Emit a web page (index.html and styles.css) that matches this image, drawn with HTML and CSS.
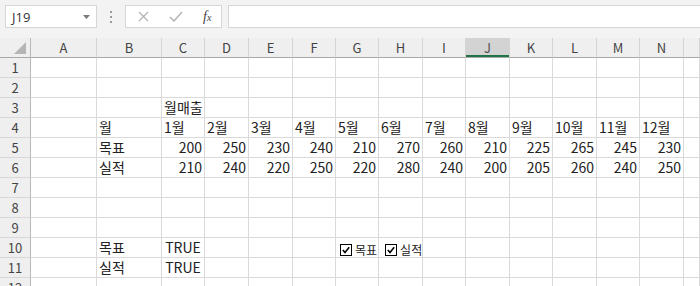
FILE: index.html
```html
<!DOCTYPE html>
<html lang="ko">
<head>
  <meta charset="UTF-8">
  <title>월매출</title>
  <link rel="stylesheet" href="styles.css">
</head>
<body>

  <!-- Formula bar -->
  <div class="toolbar">
    <div class="namebox">
      <span>J19</span>
      <svg class="arrow" width="7" height="4" viewBox="0 0 7 4"><path d="M0 0H7L3.5 4Z" fill="#7a7a7a"/></svg>
    </div>
    <div class="grip"><i></i><i></i><i></i></div>
    <div class="fxbox">
      <svg width="11" height="11" viewBox="0 0 11 11"><path d="M1 1L10 10M10 1L1 10" stroke="#b4b4b4" stroke-width="1.3" fill="none"/></svg>
      <svg width="14" height="11" viewBox="0 0 14 11"><path d="M1 6L5 10L13 1" stroke="#b4b4b4" stroke-width="1.5" fill="none"/></svg>
      <span class="fx">f<small>x</small></span>
    </div>
    <div class="formula"></div>
  </div>

  <!-- Sheet -->
  <div class="sheet">
    <div class="row head">
      <div class="corner"></div>
      <div class="ch">A</div><div class="ch">B</div><div class="ch">C</div><div class="ch">D</div>
      <div class="ch">E</div><div class="ch">F</div><div class="ch">G</div><div class="ch">H</div>
      <div class="ch">I</div><div class="ch sel">J</div><div class="ch">K</div><div class="ch">L</div>
      <div class="ch">M</div><div class="ch">N</div><div class="ch"></div>
    </div>

    <div class="row">
      <div class="rh">1</div>
      <div class="c"></div><div class="c"></div><div class="c"></div><div class="c"></div><div class="c"></div>
      <div class="c"></div><div class="c"></div><div class="c"></div><div class="c"></div><div class="c"></div>
      <div class="c"></div><div class="c"></div><div class="c"></div><div class="c"></div><div class="c"></div>
    </div>
    <div class="row">
      <div class="rh">2</div>
      <div class="c"></div><div class="c"></div><div class="c"></div><div class="c"></div><div class="c"></div>
      <div class="c"></div><div class="c"></div><div class="c"></div><div class="c"></div><div class="c"></div>
      <div class="c"></div><div class="c"></div><div class="c"></div><div class="c"></div><div class="c"></div>
    </div>
    <div class="row">
      <div class="rh">3</div>
      <div class="c"></div><div class="c"></div><div class="c over">월매출</div><div class="c"></div><div class="c"></div>
      <div class="c"></div><div class="c"></div><div class="c"></div><div class="c"></div><div class="c"></div>
      <div class="c"></div><div class="c"></div><div class="c"></div><div class="c"></div><div class="c"></div>
    </div>
    <div class="row">
      <div class="rh">4</div>
      <div class="c"></div><div class="c">월</div>
      <div class="c">1월</div><div class="c">2월</div><div class="c">3월</div><div class="c">4월</div>
      <div class="c">5월</div><div class="c">6월</div><div class="c">7월</div><div class="c">8월</div>
      <div class="c">9월</div><div class="c">10월</div><div class="c">11월</div><div class="c">12월</div>
      <div class="c"></div>
    </div>
    <div class="row">
      <div class="rh">5</div>
      <div class="c"></div><div class="c">목표</div>
      <div class="c num">200</div><div class="c num">250</div><div class="c num">230</div><div class="c num">240</div>
      <div class="c num">210</div><div class="c num">270</div><div class="c num">260</div><div class="c num">210</div>
      <div class="c num">225</div><div class="c num">265</div><div class="c num">245</div><div class="c num">230</div>
      <div class="c"></div>
    </div>
    <div class="row">
      <div class="rh">6</div>
      <div class="c"></div><div class="c">실적</div>
      <div class="c num">210</div><div class="c num">240</div><div class="c num">220</div><div class="c num">250</div>
      <div class="c num">220</div><div class="c num">280</div><div class="c num">240</div><div class="c num">200</div>
      <div class="c num">205</div><div class="c num">260</div><div class="c num">240</div><div class="c num">250</div>
      <div class="c"></div>
    </div>
    <div class="row">
      <div class="rh">7</div>
      <div class="c"></div><div class="c"></div><div class="c"></div><div class="c"></div><div class="c"></div>
      <div class="c"></div><div class="c"></div><div class="c"></div><div class="c"></div><div class="c"></div>
      <div class="c"></div><div class="c"></div><div class="c"></div><div class="c"></div><div class="c"></div>
    </div>
    <div class="row">
      <div class="rh">8</div>
      <div class="c"></div><div class="c"></div><div class="c"></div><div class="c"></div><div class="c"></div>
      <div class="c"></div><div class="c"></div><div class="c"></div><div class="c"></div><div class="c"></div>
      <div class="c"></div><div class="c"></div><div class="c"></div><div class="c"></div><div class="c"></div>
    </div>
    <div class="row">
      <div class="rh">9</div>
      <div class="c"></div><div class="c"></div><div class="c"></div><div class="c"></div><div class="c"></div>
      <div class="c"></div><div class="c"></div><div class="c"></div><div class="c"></div><div class="c"></div>
      <div class="c"></div><div class="c"></div><div class="c"></div><div class="c"></div><div class="c"></div>
    </div>
    <div class="row">
      <div class="rh">10</div>
      <div class="c"></div><div class="c">목표</div><div class="c bool">TRUE</div><div class="c"></div><div class="c"></div>
      <div class="c"></div><div class="c"></div><div class="c"></div><div class="c"></div><div class="c"></div>
      <div class="c"></div><div class="c"></div><div class="c"></div><div class="c"></div><div class="c"></div>
    </div>
    <div class="row">
      <div class="rh">11</div>
      <div class="c"></div><div class="c">실적</div><div class="c bool">TRUE</div><div class="c"></div><div class="c"></div>
      <div class="c"></div><div class="c"></div><div class="c"></div><div class="c"></div><div class="c"></div>
      <div class="c"></div><div class="c"></div><div class="c"></div><div class="c"></div><div class="c"></div>
    </div>
    <div class="row">
      <div class="rh">12</div>
      <div class="c"></div><div class="c"></div><div class="c"></div><div class="c"></div><div class="c"></div>
      <div class="c"></div><div class="c"></div><div class="c"></div><div class="c"></div><div class="c"></div>
      <div class="c"></div><div class="c"></div><div class="c"></div><div class="c"></div><div class="c"></div>
    </div>
  </div>

  <!-- Form controls floating over the sheet -->
  <div class="controls">
    <label class="check">
      <svg width="12" height="12" viewBox="0 0 12 12"><rect x="0.5" y="0.5" width="11" height="11" fill="#fff" stroke="#000"/><path d="M2.8 6L5 8.4L9.2 3.2" stroke="#000" stroke-width="1.6" fill="none"/></svg>
      목표
    </label>
    <label class="check">
      <svg width="12" height="12" viewBox="0 0 12 12"><rect x="0.5" y="0.5" width="11" height="11" fill="#fff" stroke="#000"/><path d="M2.8 6L5 8.4L9.2 3.2" stroke="#000" stroke-width="1.6" fill="none"/></svg>
      실적
    </label>
  </div>

</body>
</html>
```

FILE: styles.css
```css
body {
  margin: 0;
  width: 700px;
  height: 286px;
  overflow: hidden;
  position: relative;
  background-color: white;
  font-family: "Noto Sans CJK KR", sans-serif;
  color: #222;
}
.toolbar {
  height: 38px;
  box-sizing: border-box;
  padding: 5px 0 0 5px;
  background-color: #f3f3f3;
  display: flex;
  align-items: flex-start;
}
.namebox {
  width: 92px;
  height: 23px;
  box-sizing: border-box;
  border: 1px solid #d6d6d6;
  background-color: white;
  display: flex;
  align-items: center;
  justify-content: space-between;
  padding: 0 6px 0 6px;
  font-family: "Open Sans", sans-serif;
  font-size: 13px;
  color: #333;
}
.grip {
  width: 28px;
  height: 23px;
  display: flex;
  flex-direction: column;
  align-items: center;
  justify-content: center;
  gap: 3px;
}
.grip i {
  width: 2px;
  height: 2px;
  background-color: #9a9a9a;
}
.fxbox {
  width: 97px;
  height: 23px;
  box-sizing: border-box;
  border: 1px solid #d6d6d6;
  background-color: white;
  display: flex;
  align-items: center;
  padding-left: 12px;
  gap: 20px;
}
.fx {
  font-family: "Liberation Serif", serif;
  font-style: italic;
  font-size: 14px;
  color: #444;
}
.fx small {
  font-size: 10px;
}
.formula {
  flex: 1;
  height: 23px;
  margin-left: 6px;
  box-sizing: border-box;
  border: 1px solid #d6d6d6;
  border-right: none;
  background-color: white;
}

.row {
  display: grid;
  grid-template-columns: 31px 66px 65px 43px 44px 44px 43px 43px 44px 43px 44px 43px 44px 43px 44px 1fr;
  height: 20px;
}
.row > div {
  box-sizing: border-box;
  height: 20px;
}
.head {
  background-color: #efefef;
}
.corner {
  border-right: 1px solid #b8b8b8;
  border-bottom: 1px solid #a8a8a8;
  position: relative;
}
.corner::after {
  content: "";
  position: absolute;
  right: 4px;
  bottom: 3px;
  border-style: solid;
  border-width: 0 0 12px 12px;
  border-color: transparent transparent #b5b5b5 transparent;
}
.ch {
  border-right: 1px solid #d4d4d4;
  border-bottom: 1px solid #a8a8a8;
  text-align: center;
  font-size: 13px;
  line-height: 20px;
  color: #444;
}
.ch.sel {
  background-color: #d3d3d3;
  box-shadow: inset 0 -2px 0 #217346;
  color: #555;
}
.rh {
  background-color: #efefef;
  border-right: 1px solid #b8b8b8;
  border-bottom: 1px solid #d8d8d8;
  text-align: center;
  font-size: 13px;
  line-height: 19px;
  color: #444;
}
.c {
  border-right: 1px solid #dadada;
  border-bottom: 1px solid #dadada;
  padding: 2px 2px 0 2px;
  font-size: 14px;
  line-height: 15px;
  white-space: nowrap;
}
.c.over {
  overflow: visible;
}
.c.num {
  text-align: right;
}
.c.bool {
  text-align: center;
}

.controls {
  position: absolute;
  left: 340px;
  top: 243px;
  display: flex;
  gap: 8px;
}
.check {
  display: flex;
  align-items: center;
  gap: 3px;
  font-size: 12px;
  line-height: 14px;
  color: #222;
}
```
